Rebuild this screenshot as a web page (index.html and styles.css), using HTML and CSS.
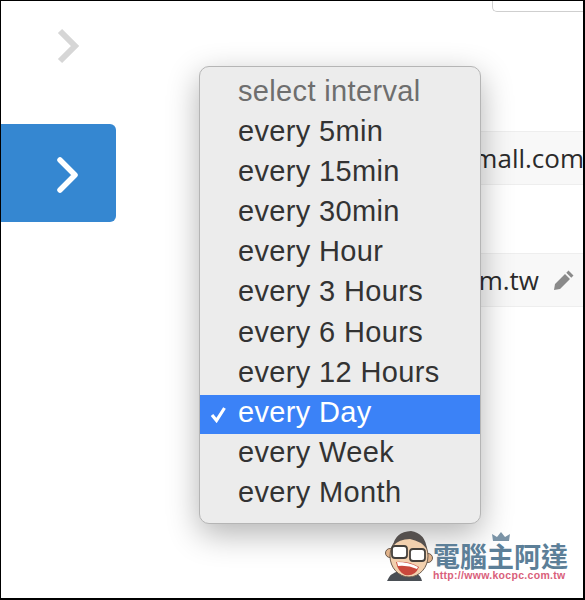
FILE: index.html
```html
<!DOCTYPE html>
<html lang="en">
<head>
    <meta charset="UTF-8" />
    <title>select interval</title>
    <link rel="stylesheet" href="styles.css">
</head>
<body>
    <div class="frame">
        <div class="side">
            <svg class="chev" width="24" height="38" viewBox="0 0 24 38"><path d="M4 4 L19 19 L4 34" fill="none" stroke="#d6d6d6" stroke-width="6"/></svg>
            <div class="next">
                <svg width="24" height="38" viewBox="0 0 24 38"><path d="M4 4 L19 19 L4 34" fill="none" stroke="#fff" stroke-width="5.5" stroke-linecap="round" stroke-linejoin="round"/></svg>
            </div>
        </div>
        <div class="main">
            <div class="topbox"></div>
            <div class="row row-mail"><span>mall.com</span></div>
            <div class="row row-site">
                <span>m.tw</span>
                <svg class="pencil" width="22" height="22" viewBox="0 0 22 22"><path d="M15.5 1.5 L20.5 6.5 L18.3 8.7 L13.3 3.7 Z M12 5 L17 10 L7 20 L1 21 L2 15 Z" fill="#8a8a8a"/></svg>
            </div>
        </div>

        <ul class="menu">
            <li class="head">select interval</li>
            <li>every 5min</li>
            <li>every 15min</li>
            <li>every 30min</li>
            <li>every Hour</li>
            <li>every 3 Hours</li>
            <li>every 6 Hours</li>
            <li>every 12 Hours</li>
            <li class="on">
                <svg class="tick" width="17" height="17" viewBox="0 0 17 17"><path d="M2 9 L6.5 14.5 L14.5 2" fill="none" stroke="#fff" stroke-width="3.2"/></svg>
                every Day
            </li>
            <li>every Week</li>
            <li>every Month</li>
        </ul>

        <div class="logo">
            <svg class="face" width="48" height="50" viewBox="0 0 48 50">
                <path d="M2 50 Q5 42 14 40 L30 42 Q36 44 37 50 Z" fill="#4a4f55"/>
                <circle cx="5" cy="22" r="4.5" fill="#e2b48c" stroke="#6b5a4c"/>
                <circle cx="43" cy="27" r="4.5" fill="#e2b48c" stroke="#6b5a4c"/>
                <ellipse cx="24" cy="25" rx="19" ry="21" fill="#f2d0ae" stroke="#6b5a4c"/>
                <path d="M8 15 Q10 1 26 0 Q40 2 42 18 Q36 10 25 8 Q14 8 8 15 Z" fill="#55504e"/>
                <rect x="7" y="15" width="15" height="12" rx="3" fill="#fff" stroke="#44403c" stroke-width="1.8"/>
                <rect x="25" y="18" width="15" height="12" rx="3" fill="#fff" stroke="#44403c" stroke-width="1.8"/>
                <path d="M11 31 Q24 30 34 36 Q30 46 20 44 Q13 41 11 31 Z" fill="#c9483c"/>
                <path d="M12 31 Q24 31 33 36 L32 38 Q23 34 13 35 Z" fill="#fff"/>
            </svg>
            <div class="brand">
                <svg class="crown" width="20" height="10" viewBox="0 0 20 10"><path d="M2 9 L1 2 L6 5 L10 0 L14 5 L19 2 L18 9 Z" fill="#7a93a6"/></svg>
                <div class="brand-name">電腦主阿達</div>
                <div class="brand-url">http://www.kocpc.com.tw</div>
            </div>
        </div>
    </div>
</body>
</html>
```

FILE: styles.css
```css
* {
    box-sizing: border-box;
}
body {
    margin: 0;
    background: #fff;
}
.frame {
    position: relative;
    display: flex;
    width: 585px;
    height: 600px;
    overflow: hidden;
    border-top: 1px solid #000;
    border-left: 1px solid #000;
    border-right: 2px solid #000;
    border-bottom: 2px solid #000;
    background: #fff;
    font-family: "Liberation Sans", Arial, sans-serif;
}
.side {
    width: 115px;
    flex: none;
}
.chev {
    display: block;
    margin: 26px 0 0 55px;
}
.next {
    height: 98px;
    margin-top: 59px;
    padding: 3px 0 0 55px;
    display: flex;
    align-items: center;
    background: #3587d1;
    border-radius: 0 6px 6px 0;
}
.main {
    flex: 1;
}
.topbox {
    width: 92px;
    height: 12px;
    margin-left: 376px;
    margin-top: -1px;
    border: 1px solid #cfcfcf;
    border-top: none;
    border-right: none;
    border-radius: 0 0 0 5px;
}
.row {
    display: flex;
    align-items: center;
    justify-content: flex-end;
    margin-left: 120px;
    background: #f8f8f8;
    border-top: 1px solid #eee;
    border-bottom: 1px solid #eee;
    font-family: "Open Sans", sans-serif;
    font-size: 26px;
    color: #2b2b2b;
}
.row-mail {
    height: 54px;
    margin-top: 119px;
}
.row-site {
    height: 54px;
    margin-top: 68px;
    padding-right: 9px;
    gap: 14px;
}
.pencil {
    flex: none;
}
.menu {
    position: absolute;
    left: 198px;
    top: 65px;
    width: 282px;
    height: 458px;
    margin: 0;
    padding: 4px 0 0;
    list-style: none;
    background: #ececec;
    border: 1px solid #b5b5b5;
    border-radius: 10px;
    box-shadow: 0 10px 32px rgba(0, 0, 0, 0.3);
    font-size: 29px;
    letter-spacing: 0.35px;
    color: #333;
}
.menu li {
    height: 40.1px;
    line-height: 40px;
    padding-left: 38px;
}
.menu .head {
    color: #6e6e6e;
}
.menu .on {
    position: relative;
    height: 39px;
    margin: 3px 0 -2px;
    line-height: 34px;
    background: #3b82f7;
    color: #fff;
}
.tick {
    position: absolute;
    left: 10px;
    top: 11px;
}
.logo {
    position: absolute;
    left: 384px;
    top: 530px;
    display: flex;
    align-items: flex-end;
}
.face {
    display: block;
}
.brand {
    position: relative;
}
.crown {
    position: absolute;
    left: 58px;
    top: 0;
}
.brand-name {
    margin-top: 10px;
    font-family: "Noto Sans CJK TC", sans-serif;
    font-size: 27px;
    font-weight: 700;
    line-height: 27px;
    color: #5c7f98;
    white-space: nowrap;
}
.brand-url {
    font-size: 10.5px;
    font-weight: 700;
    line-height: 12px;
    letter-spacing: 0.3px;
    color: #d9607a;
    white-space: nowrap;
}
```
